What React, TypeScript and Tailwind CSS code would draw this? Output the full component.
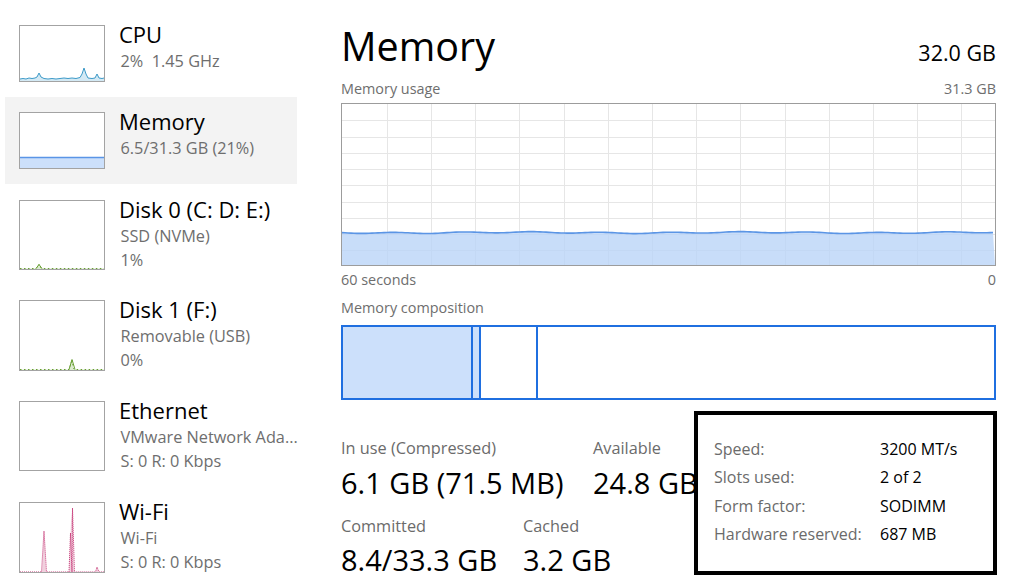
import React from "react";

/* ---------- small performance thumbnails in the left list ---------- */

function Thumb({ h, children }: { h: number; children?: React.ReactNode }) {
  return (
    <div
      className="w-[86px] shrink-0 border border-[#a3a3a3] bg-white"
      style={{ height: h }}
    >
      <svg width="84" height={h - 2} viewBox={`0 0 84 ${h - 2}`} className="block">
        {children}
      </svg>
    </div>
  );
}

function CpuThumb() {
  const line =
    "M0,53 L3,52.5 L6,53 L9,52 L12,52.5 L15,52 L17,51 L19,47 L21,51 L24,52.5 L28,53 L32,52.5 L36,53 L40,52.5 L44,52 L48,52.5 L52,52 L56,52.5 L60,51.5 L62,48 L64,42 L66,48 L68,52 L72,52.5 L75,52 L77,48 L79,52 L82,52.5 L84,52";
  return (
    <Thumb h={57}>
      <path d={line + " L84,55 L0,55 Z"} fill="#d3e9f4" />
      <path d={line} fill="none" stroke="#3d9ac8" strokeWidth="1" />
    </Thumb>
  );
}

function MemoryThumb() {
  return (
    <Thumb h={57}>
      <rect x="0" y="44" width="84" height="11" fill="#cce0fb" />
      <line x1="0" x2="84" y1="44.5" y2="44.5" stroke="#5a95e6" strokeWidth="1.5" />
    </Thumb>
  );
}

function DiskThumb({ spikeX, spikeH, h }: { spikeX: number; spikeH: number; h: number }) {
  const b = h - 2.5;
  const line = `M0,${b} L${spikeX - 3},${b} L${spikeX - 1},${b - spikeH * 0.6} L${spikeX},${b - spikeH} L${spikeX + 1.5},${b - 1} L${spikeX + 3},${b} L84,${b}`;
  return (
    <Thumb h={h}>
      <path d={line + ` L84,${h - 2} L0,${h - 2} Z`} fill="#dcebd0" />
      <path d={line} fill="none" stroke="#6a9f35" strokeWidth="1" strokeDasharray="1.5 2.5" />
      <path
        d={`M${spikeX - 3},${b} L${spikeX},${b - spikeH} L${spikeX + 3},${b}`}
        fill="none"
        stroke="#6a9f35"
        strokeWidth="1"
      />
    </Thumb>
  );
}

function WifiThumb() {
  const h = 71;
  const b = h - 2;
  return (
    <Thumb h={h}>
      <path
        d={`M22,${b} L24,28 L26,${b} Z M49,${b} L51,18 L52.5,5 L54,${b} Z M76,${b} L77,64 L78.5,${b} Z`}
        fill="#f1d0de"
      />
      <path
        d={`M0,${b} L21.5,${b} L24,28 L26.5,${b} L49,${b} L50.5,30 L52,${b} L52.5,5 L54.5,${b} L75.5,${b} L77,64 L79,${b} L84,${b}`}
        fill="none"
        stroke="#c2296c"
        strokeWidth="1"
        strokeDasharray="1 1"
      />
    </Thumb>
  );
}

/* ---------- left list ---------- */

function SideItem({
  title,
  lines,
  thumb,
  height,
  padTop,
  active,
}: {
  title: string;
  lines: string[];
  thumb: React.ReactNode;
  height: number;
  padTop: number;
  active?: boolean;
}) {
  return (
    <div
      className={`flex gap-[14px] pl-[14px] ${active ? "bg-[#f3f3f3]" : ""}`}
      style={{ height, paddingTop: padTop }}
    >
      {thumb}
      <div className="-mt-[3.5px] flex flex-col whitespace-nowrap">
        <div className="h-[24px] text-[22px] leading-[24px] text-black">{title}</div>
        <div className="mt-[3px] ml-[1.5px] flex flex-col">
          {lines.map((l) => (
            <div key={l} className="h-[24px] text-[16.3px] leading-[24px] text-[#6e6e6e]">
              {l}
            </div>
          ))}
        </div>
      </div>
    </div>
  );
}

function Sidebar() {
  return (
    <div className="ml-[5px] flex w-[292px] shrink-0 flex-col pt-[10px]">
      <SideItem title="CPU" lines={["2%\u00a0 1.45 GHz"]} thumb={<CpuThumb />} height={87} padTop={15} />
      <SideItem
        title="Memory"
        lines={["6.5/31.3 GB (21%)"]}
        thumb={<MemoryThumb />}
        height={87}
        padTop={15}
        active
      />
      <SideItem
        title="Disk 0 (C: D: E:)"
        lines={["SSD (NVMe)", "1%"]}
        thumb={<DiskThumb spikeX={19} spikeH={4} h={70} />}
        height={101}
        padTop={16}
      />
      <SideItem
        title="Disk 1 (F:)"
        lines={["Removable (USB)", "0%"]}
        thumb={<DiskThumb spikeX={52} spikeH={10} h={71} />}
        height={101}
        padTop={15}
      />
      <SideItem
        title="Ethernet"
        lines={["VMware Network Ada...", "S: 0 R: 0 Kbps"]}
        thumb={<Thumb h={70} />}
        height={101}
        padTop={15}
      />
      <SideItem
        title="Wi-Fi"
        lines={["Wi-Fi", "S: 0 R: 0 Kbps"]}
        thumb={<WifiThumb />}
        height={96}
        padTop={15}
      />
    </div>
  );
}

/* ---------- memory usage graph ---------- */

const gridX = Array.from({ length: 14 }, (_, k) => Math.round(44.7 + 44.2 * k) + 0.5);
const gridY = Array.from({ length: 9 }, (_, k) => Math.round(16.25 * (k + 1)) + 0.5);

function UsageChart() {
  const pts: string[] = [];
  for (let x = 0; x <= 653; x += 3) {
    const y = 128.6 + Math.sin(x / 11) * 0.6 + Math.sin(x / 37) * 0.4;
    pts.push(`${x},${y.toFixed(2)}`);
  }
  const line = "M" + pts.join(" L");
  return (
    <div className="h-[163px] w-[655px] border border-[#9c9c9c] bg-white">
      <svg width="653" height="161" viewBox="0 0 653 161" className="block">
        {gridX.map((x) => (
          <line key={`v${x}`} x1={x} x2={x} y1={0} y2={161} stroke="#e6e6e6" strokeWidth="1" />
        ))}
        {gridY.map((y) => (
          <line key={`h${y}`} x1={0} x2={653} y1={y} y2={y} stroke="#e6e6e6" strokeWidth="1" />
        ))}
        <path d={line + " L653,161 L0,161 Z"} fill="rgb(186,213,248)" fillOpacity="0.8" />
        <path d={line} fill="none" stroke="#5b95e5" strokeWidth="1.6" />
      </svg>
    </div>
  );
}

/* ---------- memory composition bar ---------- */

function CompositionBar() {
  return (
    <div className="mt-[3px] flex h-[75px] w-[655px] border-2 border-[#1f6fe0]">
      <div className="w-[130px] border-r-2 border-[#1f6fe0] bg-[#cce0fb]" />
      <div className="w-[8px] border-r-2 border-[#1f6fe0] bg-[#cce0fb]" />
      <div className="w-[57px] border-r-2 border-[#1f6fe0] bg-white" />
      <div className="flex-1 bg-white" />
    </div>
  );
}

/* ---------- stats ---------- */

function HardwareBox() {
  const rows: [string, string][] = [
    ["Speed:", "3200 MT/s"],
    ["Slots used:", "2 of 2"],
    ["Form factor:", "SODIMM"],
    ["Hardware reserved:", "687 MB"],
  ];
  return (
    <div className="absolute left-[353px] top-[411px] h-[164px] w-[303px] border-4 border-black bg-white pl-[16px] pt-[20px]">
      {rows.map(([k, v]) => (
        <div key={k} className="flex h-[28.33px] whitespace-nowrap text-[16px] leading-[28.33px]">
          <div className="w-[166px] text-[#6b6b6b]">{k}</div>
          <div className="text-black">{v}</div>
        </div>
      ))}
    </div>
  );
}

function MainPane() {
  return (
    <div className="relative ml-[44px] flex w-[655px] flex-col">
      <div className="mt-[20px] flex h-[52px] items-baseline justify-between leading-[52px]">
        <div className="text-[39.5px] text-black">Memory</div>
        <div className="text-[21.5px] text-black">32.0 GB</div>
      </div>
      <div className="mt-[7px] flex h-[20px] justify-between text-[14.4px] leading-[20px] text-[#6e6e6e]">
        <span>Memory usage</span>
        <span>31.3 GB</span>
      </div>
      <div className="mt-[4px]">
        <UsageChart />
      </div>
      <div className="flex h-[27px] justify-between text-[14.4px] leading-[27px] text-[#6e6e6e]">
        <span>60 seconds</span>
        <span>0</span>
      </div>
      <div className="h-[29px] text-[14.4px] leading-[29px] text-[#6e6e6e]">Memory composition</div>
      <CompositionBar />
      <div className="mt-[30px] flex">
        <div className="flex w-[252px] flex-col whitespace-nowrap">
          <div className="h-[36px] text-[16.3px] leading-[36px] text-[#6b6b6b]">In use (Compressed)</div>
          <div className="h-[34px] text-[29px] leading-[34px] text-black">6.1 GB (71.5 MB)</div>
        </div>
        <div className="flex w-[200px] flex-col whitespace-nowrap">
          <div className="h-[36px] text-[16.3px] leading-[36px] text-[#6b6b6b]">Available</div>
          <div className="h-[34px] text-[29px] leading-[34px] text-black">24.8 GB</div>
        </div>
      </div>
      <div className="mt-[11px] flex">
        <div className="flex w-[182px] flex-col whitespace-nowrap">
          <div className="h-[30px] text-[16.3px] leading-[30px] text-[#6b6b6b]">Committed</div>
          <div className="h-[37px] text-[29px] leading-[37px] text-black">8.4/33.3 GB</div>
        </div>
        <div className="flex w-[160px] flex-col whitespace-nowrap">
          <div className="h-[30px] text-[16.3px] leading-[30px] text-[#6b6b6b]">Cached</div>
          <div className="h-[37px] text-[29px] leading-[37px] text-black">3.2 GB</div>
        </div>
      </div>
      <HardwareBox />
    </div>
  );
}

export default function App() {
  return (
    <div className="flex h-[583px] w-[1024px] overflow-hidden bg-white font-['Open_Sans','Noto_Sans',sans-serif]">
      <Sidebar />
      <MainPane />
    </div>
  );
}
